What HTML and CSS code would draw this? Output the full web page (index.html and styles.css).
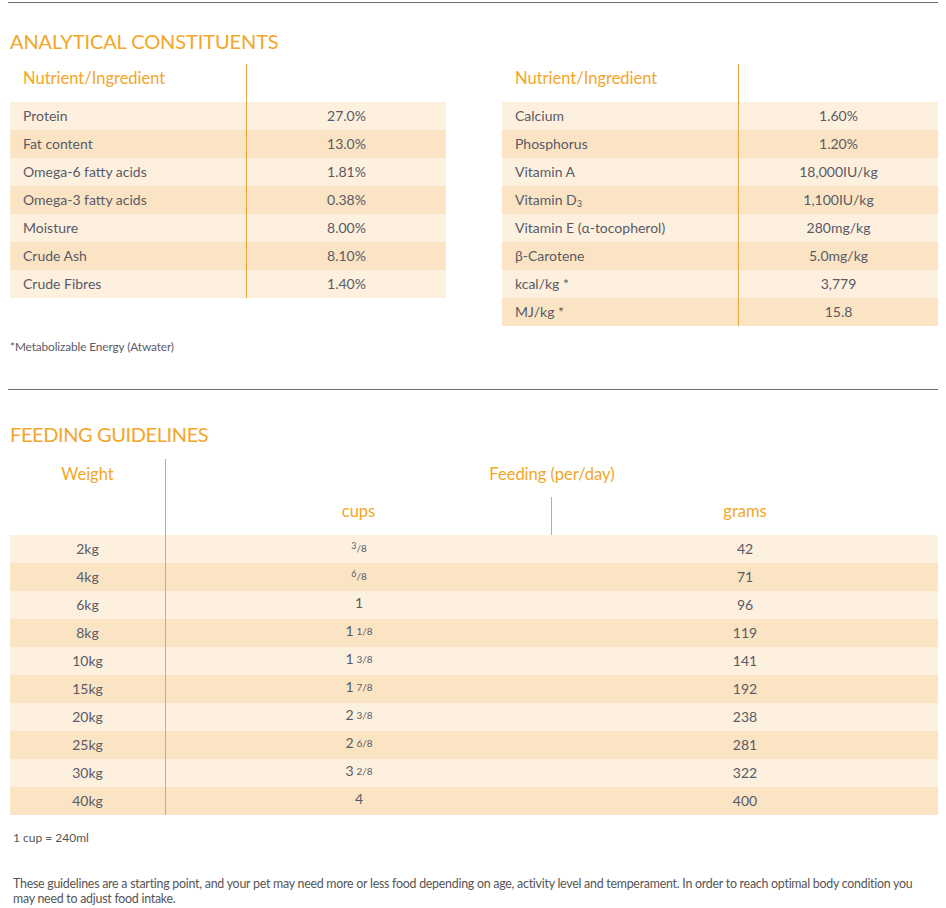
FILE: index.html
```html
<!DOCTYPE html>
<html lang="en">
<head>
<meta charset="utf-8">
<title>Analytical Constituents &amp; Feeding Guidelines</title>
<link rel="stylesheet" href="styles.css">
</head>
<body>
<div class="page">
  <div class="rule"></div>
  <h2 class="title title-first">ANALYTICAL CONSTITUENTS</h2>
  <div class="nutrients">
    <table class="ntable">
      <thead>
        <tr><th class="c1">Nutrient/Ingredient</th><th class="c2"></th></tr>
      </thead>
      <tbody>
        <tr><td class="c1">Protein</td><td class="c2">27.0%</td></tr>
        <tr><td class="c1">Fat content</td><td class="c2">13.0%</td></tr>
        <tr><td class="c1">Omega-6 fatty acids</td><td class="c2">1.81%</td></tr>
        <tr><td class="c1">Omega-3 fatty acids</td><td class="c2">0.38%</td></tr>
        <tr><td class="c1">Moisture</td><td class="c2">8.00%</td></tr>
        <tr><td class="c1">Crude Ash</td><td class="c2">8.10%</td></tr>
        <tr><td class="c1">Crude Fibres</td><td class="c2">1.40%</td></tr>
      </tbody>
    </table>
    <table class="ntable">
      <thead>
        <tr><th class="c1">Nutrient/Ingredient</th><th class="c2"></th></tr>
      </thead>
      <tbody>
        <tr><td class="c1">Calcium</td><td class="c2">1.60%</td></tr>
        <tr><td class="c1">Phosphorus</td><td class="c2">1.20%</td></tr>
        <tr><td class="c1">Vitamin A</td><td class="c2">18,000IU/kg</td></tr>
        <tr><td class="c1">Vitamin D<sub class="sub">3</sub></td><td class="c2">1,100IU/kg</td></tr>
        <tr><td class="c1">Vitamin E (α-tocopherol)</td><td class="c2">280mg/kg</td></tr>
        <tr><td class="c1">β-Carotene</td><td class="c2">5.0mg/kg</td></tr>
        <tr><td class="c1">kcal/kg *</td><td class="c2">3,779</td></tr>
        <tr><td class="c1">MJ/kg *</td><td class="c2">15.8</td></tr>
      </tbody>
    </table>
  </div>
  <p class="footnote">*Metabolizable Energy (Atwater)</p>

  <div class="rule rule-second"></div>
  <h2 class="title title-second">FEEDING GUIDELINES</h2>
  <table class="ftable">
    <thead>
      <tr class="h1">
        <th class="w" rowspan="2">Weight</th>
        <th class="feed" colspan="2">Feeding (per/day)</th>
      </tr>
      <tr class="h2">
        <th class="cups cups-head">cups</th>
        <th class="grams">grams</th>
      </tr>
    </thead>
    <tbody>
      <tr><td class="w">2kg</td><td class="cups"><span class="frac"><sup class="num">3</sup>/8</span></td><td class="grams">42</td></tr>
      <tr><td class="w">4kg</td><td class="cups"><span class="frac"><sup class="num">6</sup>/8</span></td><td class="grams">71</td></tr>
      <tr><td class="w">6kg</td><td class="cups">1</td><td class="grams">96</td></tr>
      <tr><td class="w">8kg</td><td class="cups">1<span class="mixed">1/8</span></td><td class="grams">119</td></tr>
      <tr><td class="w">10kg</td><td class="cups">1<span class="mixed">3/8</span></td><td class="grams">141</td></tr>
      <tr><td class="w">15kg</td><td class="cups">1<span class="mixed">7/8</span></td><td class="grams">192</td></tr>
      <tr><td class="w">20kg</td><td class="cups">2<span class="mixed">3/8</span></td><td class="grams">238</td></tr>
      <tr><td class="w">25kg</td><td class="cups">2<span class="mixed">6/8</span></td><td class="grams">281</td></tr>
      <tr><td class="w">30kg</td><td class="cups">3<span class="mixed">2/8</span></td><td class="grams">322</td></tr>
      <tr><td class="w">40kg</td><td class="cups">4</td><td class="grams">400</td></tr>
    </tbody>
  </table>
  <p class="note">1 cup = 240ml</p>
  <p class="para">These guidelines are a starting point, and your pet may need more or less food depending on age, activity level and temperament. In order to reach optimal body condition you may need to adjust food intake.</p>
</div>
</body>
</html>
```

FILE: styles.css
```css
* {
  box-sizing: border-box;
}

body {
  margin: 0;
  background: #ffffff;
  font-family: Lato, "Open Sans", "Liberation Sans", sans-serif;
  color: #5a5a66;
}

.page {
  margin: 0 8px;
  padding-top: 2px;
}

.rule {
  height: 0;
  border-top: 1px solid #6e6e6e;
}

.rule-second {
  margin-top: 34px;
}

.title {
  margin: 0;
  padding-left: 2px;
  font-size: 20px;
  line-height: 25px;
  font-weight: 400;
  letter-spacing: -0.1px;
  color: #f3a628;
}

.title-first {
  margin-top: 26px;
  margin-bottom: 10px;
}

.title-second {
  margin-top: 32px;
  margin-bottom: 12px;
  letter-spacing: -0.4px;
}

.nutrients {
  display: grid;
  grid-template-columns: 436px 436px;
  column-gap: 56px;
  align-items: start;
  padding-left: 2px;
}

table {
  border-collapse: separate;
  border-spacing: 0;
  table-layout: fixed;
}

.ntable {
  width: 436px;
}

.ntable th {
  height: 38px;
  padding: 4px 0 0 13px;
  vertical-align: top;
  text-align: left;
  font-size: 16.5px;
  line-height: 20px;
  font-weight: 400;
  color: #f3a628;
}

.ntable .c1 {
  width: 237px;
  border-right: 1px solid #e9a53c;
}

.ntable td {
  height: 28px;
  padding: 0;
  font-size: 14px;
  line-height: 27px;
  vertical-align: top;
}

.ntable td.c1 {
  padding-left: 13px;
}

.ntable td.c2 {
  text-align: center;
}

.ntable tbody tr:nth-child(odd) td,
.ftable tbody tr:nth-child(odd) td {
  background: #fdf0df;
}

.ntable tbody tr:nth-child(even) td,
.ftable tbody tr:nth-child(even) td {
  background: #fae4c4;
}

.sub {
  font-size: 9px;
  line-height: 0;
  vertical-align: -2px;
}

.footnote {
  margin: 13px 0 0 2px;
  font-size: 11.8px;
  line-height: 16px;
  letter-spacing: -0.1px;
}

.ftable {
  width: 928px;
  margin-left: 2px;
}

.ftable th {
  padding: 0;
  font-weight: 400;
  font-size: 16.5px;
  line-height: 20px;
  color: #f3a628;
  text-align: center;
  vertical-align: top;
}

.ftable .h1 th {
  height: 38px;
  padding-top: 5px;
}

.ftable .h2 th {
  height: 38px;
  padding-top: 4px;
}

.ftable .w {
  width: 156px;
  border-right: 1px solid #e9a53c;
}

.ftable .cups {
  width: 386px;
}

.ftable .cups-head {
  border-right: 1px solid #e9a53c;
}

.ftable tbody tr {
  height: 28px;
}

.ftable td {
  height: 28px;
  padding: 0;
  font-size: 14px;
  line-height: 27px;
  text-align: center;
  vertical-align: top;
}

.ftable td.cups {
  line-height: 23px;
  padding-bottom: 5px;
}

.frac {
  font-size: 10px;
  line-height: 1;
}

.num {
  font-size: 9px;
  line-height: 0;
  vertical-align: 3px;
}

.mixed {
  font-size: 10px;
  line-height: 1;
  margin-left: 3px;
  vertical-align: 1px;
}

.note {
  margin: 15px 0 0 5px;
  font-size: 12px;
  line-height: 16px;
  color: #555555;
}

.para {
  margin: 30px 10px 0 5px;
  font-size: 12.4px;
  line-height: 15px;
  letter-spacing: -0.25px;
  color: #555555;
}
```
